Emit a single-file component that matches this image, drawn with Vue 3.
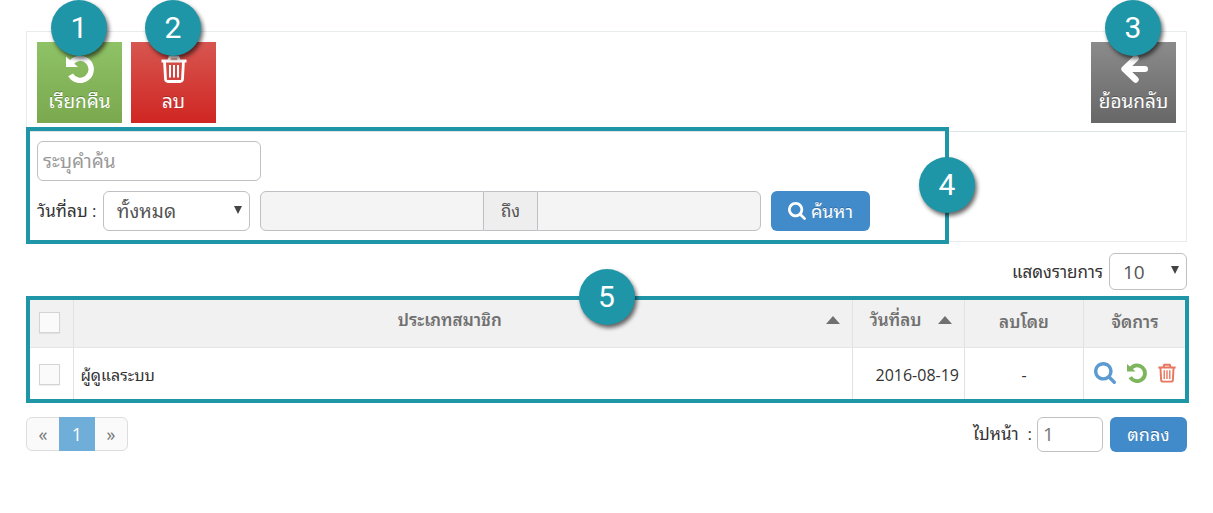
<script setup>
import { ref } from 'vue'

const keyword = ref('')
const range = ref('all')
const pageSize = ref('10')
const page = ref('1')
const rows = [{ id: 1, name: 'ผู้ดูแลระบบ', date: '2016-08-19', by: '-' }]
</script>

<template>
  <svg class="defs" aria-hidden="true">
    <symbol id="i-undo" viewBox="0 0 28 28">
      <path d="M5.500 7.600 A11 11 0 1 1 4.600 19.800" fill="none" stroke="currentColor" stroke-width="5.400" />
      <path d="M0 1.500 L0 12 L12 12 Z" fill="currentColor" />
    </symbol>
    <symbol id="i-trash" viewBox="0 0 26 28">
      <g fill="none" stroke="currentColor" stroke-width="2.8">
        <path d="M0.500 6H25.500M7.500 6L9 2.200H17L18.500 6M3.500 6L4.500 24Q4.700 26.500 7 26.500H19Q21.300 26.500 21.500 24L22.500 6" />
        <path d="M9 10V22.500M13 10V22.500M17 10V22.500" stroke-width="2" />
      </g>
    </symbol>
    <symbol id="i-search" viewBox="64 128 1664 1664">
      <path fill="currentColor" d="M1216 832q0-185-131.500-316.500t-316.500-131.500-316.500 131.500-131.500 316.500 131.500 316.500 316.500 131.500 316.500-131.500 131.500-316.500zm512 832q0 52-38 90t-90 38q-54 0-90-38l-343-342q-179 124-399 124-143 0-273.500-55.500t-225-150-150-225-55.500-273.500 55.500-273.500 150-225 225-150 273.500-55.500 273.500 55.500 225 150 150 225 55.500 273.500q0 220-124 399l343 343q37 37 37 90z" />
    </symbol>
    <symbol id="i-back" viewBox="0 0 28 28">
      <path d="M15.500 3.500L4.500 14L15.500 24.500" fill="none" stroke="currentColor" stroke-width="6.400" stroke-linejoin="round" stroke-linecap="round" />
      <path d="M6 14H25" fill="none" stroke="currentColor" stroke-width="6" stroke-linecap="round" />
    </symbol>
  </svg>

  <main class="page">
    <section class="panel">
      <div class="toolbar">
        <div class="tile-wrap">
          <button class="tile green"><svg class="tile-icon"><use href="#i-undo" /></svg>เรียกคืน</button>
          <span class="badge on-tile">1</span>
        </div>
        <div class="tile-wrap">
          <button class="tile red"><svg class="tile-icon"><use href="#i-trash" /></svg>ลบ</button>
          <span class="badge on-tile">2</span>
        </div>
        <div class="tile-wrap last">
          <button class="tile gray"><svg class="tile-icon"><use href="#i-back" /></svg>ย้อนกลับ</button>
          <span class="badge on-tile">3</span>
        </div>
      </div>

      <form class="filter" @submit.prevent>
        <input v-model="keyword" class="field keyword" type="text" placeholder="ระบุคำค้น" aria-label="ระบุคำค้น" />
        <div class="filter-row">
          <label for="range">วันที่ลบ :</label>
          <span class="select range">
            <select id="range" v-model="range"><option value="all">ทั้งหมด</option></select>
          </span>
          <div class="dates">
            <input class="field" type="text" disabled aria-label="วันที่ลบ" />
            <span class="addon">ถึง</span>
            <input class="field" type="text" disabled aria-label="ถึง" />
          </div>
          <button class="primary search"><svg><use href="#i-search" /></svg>ค้นหา</button>
        </div>
        <div class="frame filter-frame"><span class="badge">4</span></div>
      </form>
    </section>

    <div class="size-row">
      <label for="size">แสดงรายการ</label>
      <span class="select size">
        <select id="size" v-model="pageSize"><option>10</option></select>
      </span>
    </div>

    <div class="table-wrap">
      <table>
        <colgroup><col class="c-check" /><col /><col class="c-date" /><col class="c-by" /><col class="c-act" /></colgroup>
        <thead>
          <tr>
            <th class="check"><input type="checkbox" aria-label="เลือกทั้งหมด" /></th>
            <th><div class="sort"><span>ประเภทสมาชิก</span><i></i></div></th>
            <th><div class="sort"><span>วันที่ลบ</span><i></i></div></th>
            <th>ลบโดย</th>
            <th>จัดการ</th>
          </tr>
        </thead>
        <tbody>
          <tr v-for="r in rows" :key="r.id">
            <td class="check"><input type="checkbox" :aria-label="r.name" /></td>
            <td class="name">{{ r.name }}</td>
            <td class="date">{{ r.date }}</td>
            <td class="by">{{ r.by }}</td>
            <td>
              <div class="actions">
                <button class="view" aria-label="ค้นหา"><svg><use href="#i-search" /></svg></button>
                <button class="restore" aria-label="เรียกคืน"><svg><use href="#i-undo" /></svg></button>
                <button class="remove" aria-label="ลบ"><svg><use href="#i-trash" /></svg></button>
              </div>
            </td>
          </tr>
        </tbody>
      </table>
      <div class="frame table-frame"><span class="badge">5</span></div>
    </div>

    <footer class="footer">
      <nav class="pager">
        <a href="#">«</a><a href="#" class="current">1</a><a href="#">»</a>
      </nav>
      <form class="goto" @submit.prevent>
        <label for="goto">ไปหน้า&nbsp; :</label>
        <input id="goto" v-model="page" class="field" type="text" />
        <button class="primary">ตกลง</button>
      </form>
    </footer>
  </main>
</template>

<style>
body { background: #fff; }
</style>

<style scoped>
* { box-sizing: border-box; }
.defs { position: absolute; width: 0; height: 0; }
.page {
  padding: 31px 26px 0;
  font-family: "Open Sans", "Noto Sans Thai Looped", "Loma", "Waree", "Tahoma", "Noto Sans", sans-serif;
  font-size: 16px;
  line-height: 24px;
  color: #333;
}
button, input, select { font: inherit; margin: 0; }
button { border: 0; cursor: pointer; }
label { font-size: 17px; white-space: nowrap; }
.panel { border: 1px solid #e7ebec; }
.toolbar { display: flex; gap: 9px; padding: 10px 10px 8px; border-bottom: 1px solid #dfe4e5; }
.tile-wrap { position: relative; }
.last { margin-left: auto; }
.tile {
  display: flex; flex-direction: column; align-items: center; justify-content: flex-end;
  gap: 6px; width: 85px; height: 81px; padding: 0 0 10px;
  color: #fff; font-size: 19px; line-height: 24px; white-space: nowrap;
  text-shadow: 0 -1px 0 rgba(0, 0, 0, .25);
}
.tile-icon { width: 28px; height: 28px; }
.green { background: linear-gradient(#8fc266, #7aa84e); }
.red { background: linear-gradient(#d75650, #d02622); }
.gray { background: linear-gradient(#8b8b8b, #676767); }
.badge {
  position: absolute; z-index: 2; width: 56px; height: 56px; border-radius: 50%;
  background: #1f96a8; color: #fff; box-shadow: 2px 3px 4px rgba(0, 0, 0, .6);
  font: 30px/56px Roboto, sans-serif; text-align: center;
}
.on-tile { left: 14px; top: -42px; }
.frame { position: absolute; border: 4px solid #1f96a8; pointer-events: none; }
.filter { position: relative; padding: 9px 10px 10px; }
.field {
  display: block; height: 40px; padding: 0 5px; border: 1px solid #c0c0c4; border-radius: 6px;
  background: #fff; color: #777; font-size: 19px; min-width: 0;
}
.field::placeholder { color: #999; opacity: 1; }
.keyword { width: 224px; }
.filter-row { display: flex; align-items: center; margin-top: 10px; }
.filter-row label { width: 66px; }
.select { position: relative; display: block; }
.select::after {
  content: ""; position: absolute; right: 8px; top: 15px;
  border: 4px solid transparent; border-top: 8px solid #444; border-bottom: 0;
}
.select select {
  appearance: none; width: 100%; height: 100%; border: 1px solid #c0c0c4; border-radius: 6px;
  background: #fff; color: #555; font-size: 19px; padding: 0 13px;
}
.range { width: 147px; height: 40px; margin-right: 10px; }
.dates { display: flex; margin-right: 10px; }
.dates .field { width: 224px; background: #f4f4f4; }
.dates .field:first-child { border-radius: 6px 0 0 6px; }
.dates .field:last-child { border-radius: 0 6px 6px 0; }
.addon {
  width: 53px; height: 40px; border: solid #c0c0c4; border-width: 1px 0;
  background: #eee; color: #555; font-size: 17px; line-height: 38px; text-align: center;
}
.primary {
  display: flex; align-items: center; justify-content: center; gap: 5px;
  border-radius: 6px; background: #428bca; color: #fff; font-size: 18px;
  text-shadow: 0 -1px 0 rgba(0, 0, 0, .25); white-space: nowrap;
}
.search { width: 99px; height: 40px; padding: 0; }
.search svg { width: 18px; height: 18px; }
.filter-frame { left: -1px; top: -5px; bottom: -3px; width: 923px; }
.filter-frame .badge { right: -30px; top: 26px; }
.size-row { display: flex; justify-content: flex-end; align-items: center; gap: 6px; margin-top: 11px; }
.size { width: 78px; height: 37px; }
.size::after { top: 13px; }
.table-wrap { position: relative; margin-top: 8px; }
table { width: 100%; table-layout: fixed; border-collapse: collapse; }
.c-check { width: 47px; }
.c-date { width: 112px; }
.c-by { width: 119px; }
.c-act { width: 103px; }
th { height: 49px; padding: 0; background: #f1f1f1; color: #707070; font-size: 17px; font-weight: 600; }
td { height: 55px; padding: 0; }
th, td { border-right: 1px solid #dfe3e5; border-bottom: 1px solid #e4e6e8; }
.sort { display: flex; align-items: center; padding: 0 12px 5px 0; }
.sort span { flex: 1; text-align: center; }
.sort i { border: 7px solid transparent; border-bottom: 8px solid #707070; border-top: 0; }
.check input {
  appearance: none; display: block; width: 21px; height: 21px; margin: 0 0 0 13px;
  border: 1px solid #d4d4d4; background: #fafafa; box-shadow: 0 1px 1px rgba(0, 0, 0, .06);
}
.name { padding-left: 7px; }
.date { padding-right: 5px; text-align: right; }
.by { text-align: center; }
.actions { display: flex; align-items: center; justify-content: flex-end; gap: 11px; padding: 0 10px 4px 0; }
.actions button { padding: 0; background: none; display: flex; }
.actions svg { width: 20px; height: 20px; }
.actions .view svg { width: 22px; height: 22px; }
.view { color: #5b9bd1; }
.restore { color: #7cb55c; }
.remove { color: #e9765f; }
.actions .remove svg { width: 18px; }
.table-frame { left: 0; right: -2px; top: -2px; bottom: 0; }
.table-frame .badge { left: calc(50% - 29px); top: -31px; }
.footer { display: flex; justify-content: space-between; align-items: center; margin-top: 14px; }
.pager { display: flex; height: 34px; border: 1px solid #ddd; border-radius: 6px; background: #fafafa; }
.pager a { width: 32px; line-height: 32px; text-align: center; text-decoration: none; color: #777; font-size: 18px; }
.pager .current { width: 36px; margin: -1px 0; background: #6faed9; color: #fff; line-height: 34px; }
.goto { display: flex; align-items: center; }
.goto label { margin-right: 5px; }
.goto .field { width: 66px; height: 35px; margin-right: 7px; }
.goto .primary { width: 77px; height: 35px; }
</style>
